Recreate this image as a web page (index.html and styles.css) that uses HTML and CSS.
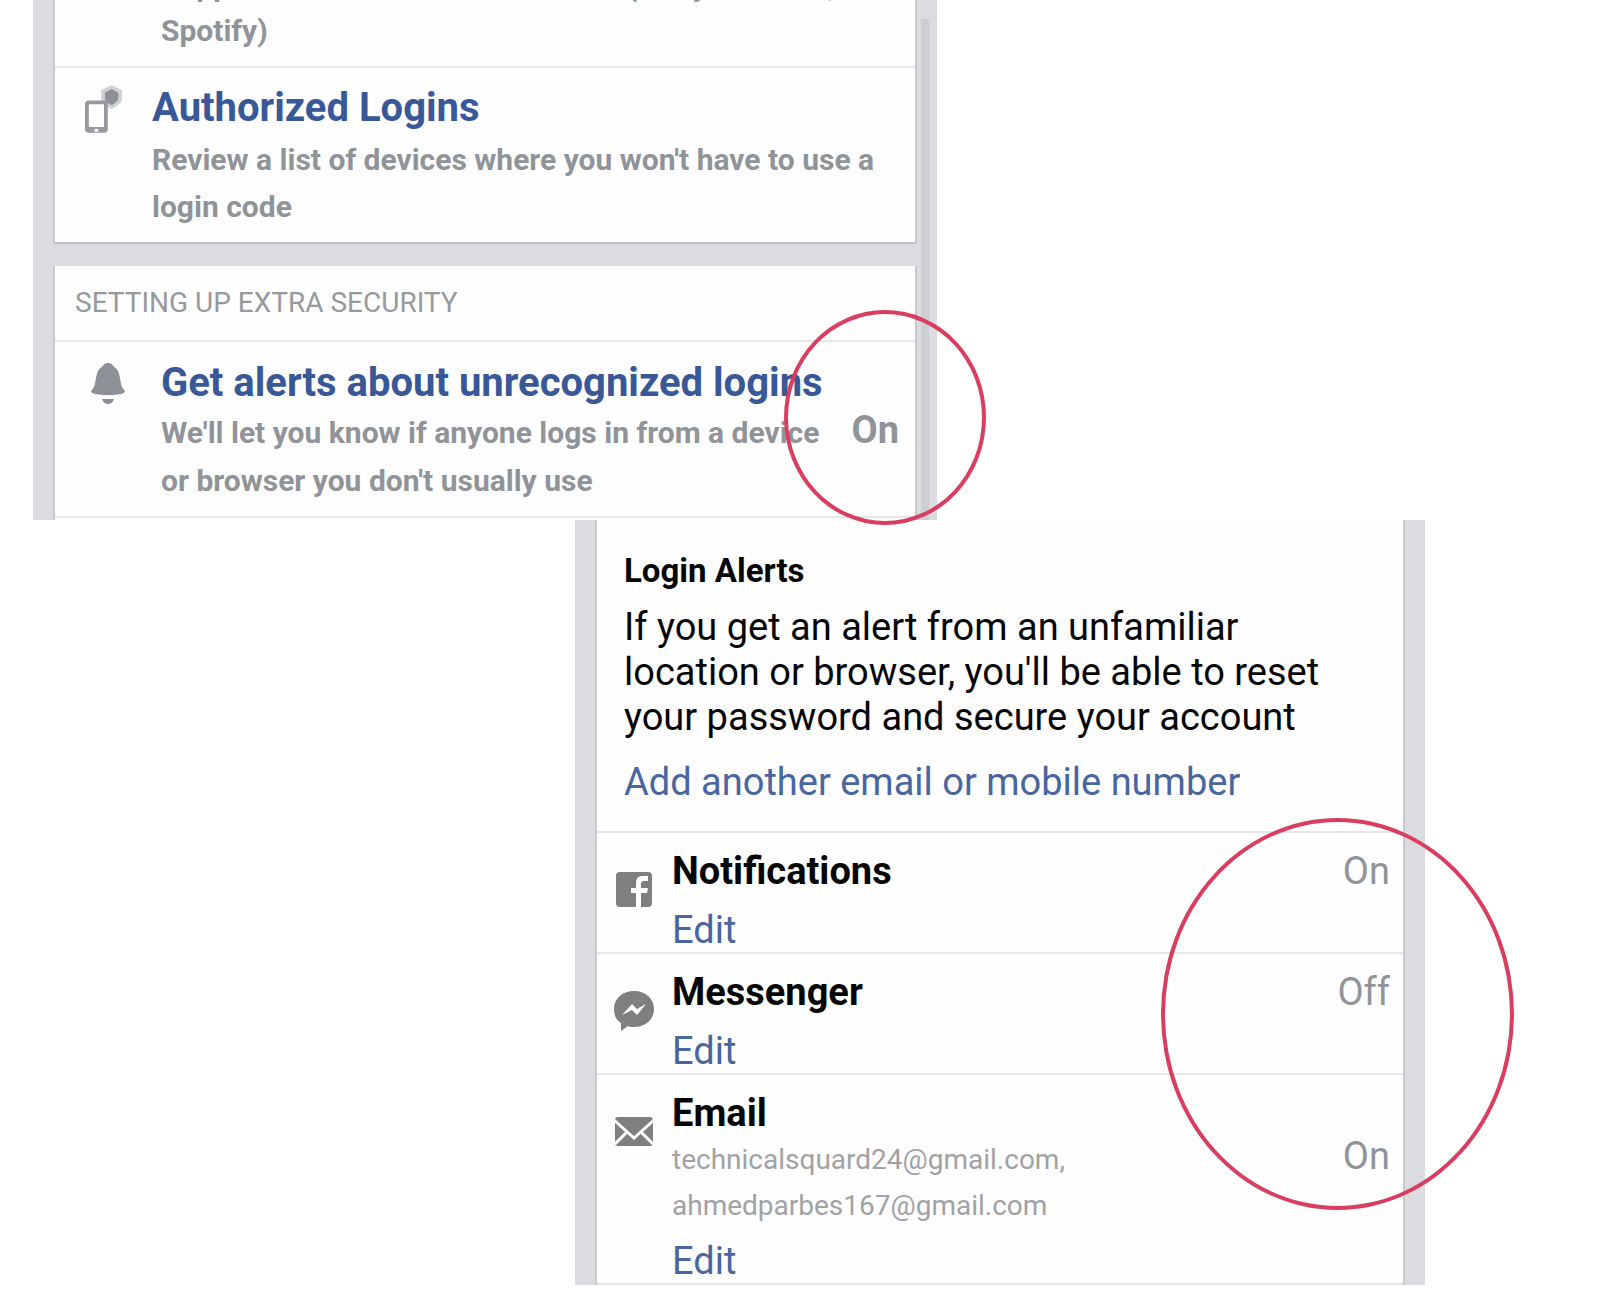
FILE: index.html
```html
<!DOCTYPE html>
<html lang="en">
<head>
<meta charset="utf-8">
<title>Security and Login</title>
<link rel="stylesheet" href="styles.css">
</head>
<body>
<main class="page">
  <section class="panel panel-settings">
    <div class="card card-top">
      <div class="row row-cut">
        <p class="desc">Support two-factor authentication (like your Xbox, Spotify)</p>
      </div>
      <div class="row row-auth">
        <svg class="icon icon-phone" viewBox="0 0 40 50" aria-hidden="true">
          <path d="M28 0l11 5v8c0 6-5 9-11 12-6-3-11-6-11-12V5z" fill="#cfd1d4"/>
          <path d="M28 4l7 4v5c0 4-3 6-7 8-4-2-7-4-7-8V8z" fill="#8d9197"/>
          <path fill-rule="evenodd" d="M4 16h16q4 0 4 4v26q0 4-4 4H4q-4 0-4-4V20q0-4 4-4zM4 20v24h16V20z" fill="#97999e"/>
          <path d="M10 46h4v3h-4z" fill="#fff"/>
        </svg>
        <div class="copy">
          <h2 class="title"><a href="#authorized">Authorized Logins</a></h2>
          <p class="desc">Review a list of devices where you won't have to use a login code</p>
        </div>
      </div>
    </div>
    <div class="card card-extra">
      <h3 class="heading">SETTING UP EXTRA SECURITY</h3>
      <div class="row row-alerts">
        <svg class="icon icon-bell" viewBox="0 0 34 42" aria-hidden="true">
          <path d="M17 0c3 0 5 2 6 4 4 2 5 6 6 11 1 7 2 10 5 13 0 3-7 4-17 4S0 31 0 28c3-3 4-6 5-13C6 10 7 6 11 4c1-2 3-4 6-4zM11 36h12c-1 3-3 5-6 5s-5-2-6-5z" fill="#8d9197"/>
        </svg>
        <div class="copy">
          <h2 class="title"><a href="#alerts">Get alerts about unrecognized logins</a></h2>
          <p class="desc">We'll let you know if anyone logs in from a device or browser you don't usually use</p>
        </div>
        <span class="state state-bold">On</span>
      </div>
    </div>
    <div class="scrollbar"></div>
    <div class="ring ring-small"></div>
  </section>

  <section class="panel panel-detail">
    <div class="card card-detail">
      <div class="intro">
        <h2 class="intro-title">Login Alerts</h2>
        <p class="intro-text">If you get an alert from an unfamiliar location or browser, you'll be able to reset your password and secure your account</p>
        <a class="link" href="#add">Add another email or mobile number</a>
      </div>
      <div class="method">
        <svg class="method-icon" viewBox="0 0 42 42" aria-hidden="true">
          <path d="M7 3h28q4 0 4 4v27q0 4-4 4h-7V24h6l1-5h-7v-4q0-3 3-3h4V7h-6q-6 0-6 7v5h-5v5h5v14H7q-4 0-4-4V7q0-4 4-4z" fill="#7f7f7f"/>
        </svg>
        <div class="method-copy">
          <h3 class="method-title">Notifications</h3>
          <a class="link" href="#notifications">Edit</a>
        </div>
        <span class="state">On</span>
      </div>
      <div class="method">
        <svg class="method-icon" viewBox="0 0 42 42" aria-hidden="true">
          <path fill-rule="evenodd" d="M21 1c12 0 20 8 20 18s-8 18-20 18c-3 0-4 0-6-1L8 41v-8C3 30 1 25 1 19 1 9 9 1 21 1zM19 14L9 25l10-5 5 5 9-11-9 5z" fill="#7f7f7f"/>
        </svg>
        <div class="method-copy">
          <h3 class="method-title">Messenger</h3>
          <a class="link" href="#messenger">Edit</a>
        </div>
        <span class="state">Off</span>
      </div>
      <div class="method method-email">
        <svg class="method-icon" viewBox="0 0 42 42" aria-hidden="true">
          <rect x="2" y="6" width="38" height="29" rx="3" fill="#7f7f7f"/>
          <path d="M1 9l20 18L41 9M2 33l12-12M40 33L28 21" fill="none" stroke="#fff" stroke-width="3"/>
        </svg>
        <div class="method-copy">
          <h3 class="method-title">Email</h3>
          <p class="emails">technicalsquard24@gmail.com, ahmedparbes167@gmail.com</p>
          <a class="link" href="#email">Edit</a>
        </div>
        <span class="state">On</span>
      </div>
    </div>
    <div class="ring ring-large"></div>
  </section>
</main>
</body>
</html>
```
FILE: styles.css
```css
* { box-sizing: border-box; }
body {
  margin: 0;
  background: #fff;
  color: #060606;
  font-family: Roboto, "Liberation Sans", sans-serif;
}
h2, h3, p { margin: 0; }
a { color: inherit; text-decoration: none; }
.page { overflow: hidden; padding-bottom: 25px; }
.panel {
  position: relative;
  padding: 0 20px;
  background: #dadce0;
}
.panel-settings {
  width: 56.5%;
  margin-left: 33px;
}
.panel-detail {
  width: 53.125%;
  margin-left: 575px;
}
.card {
  background: #fefefe;
  border: solid #c9cacf;
  border-width: 0 2px;
}
.card-top {
  border-bottom: 2px solid #bfc1c5;
  margin-bottom: 22px;
}
.card-extra { padding-bottom: 2px; }
.row {
  display: flex;
  align-items: flex-start;
}
.row-cut {
  height: 68px;
  align-items: flex-end;
  overflow: hidden;
  padding: 0 30px 13px 106px;
  border-bottom: 2px solid #e5e6e8;
}
.row-cut .desc { line-height: 45px; }
.row-auth { padding: 16px 30px 12px 30px; gap: 29px; }
.row-auth .title { margin-bottom: 4px; }
.row-alerts {
  padding: 17px 16px 11px 36px;
  gap: 20px;
  border-bottom: 2px solid #e5e6e8;
}
.row-alerts .title { margin-bottom: 2px; }
.row-alerts .desc { line-height: 48px; }
.icon { flex: none; }
.icon-phone { width: 38px; height: 50px; }
.icon-bell { width: 34px; height: 42px; margin: 4px 16px 0 0; }
.title {
  color: #385898;
  font-size: 40px;
  line-height: 48px;
  font-weight: 700;
  white-space: nowrap;
}
.desc {
  color: #909499;
  font-size: 30px;
  line-height: 47px;
  font-weight: 700;
}
.copy { flex: 1; min-width: 0; }
.heading {
  padding: 13px 20px;
  border-bottom: 2px solid #e5e6e8;
  color: #97999d;
  font-size: 28px;
  line-height: 48px;
  font-weight: 400;
}
.state {
  color: #909499;
  font-size: 38px;
  line-height: 44px;
}
.state-bold { align-self: center; padding-bottom: 4px; font-weight: 700; }
.scrollbar {
  position: absolute;
  top: 19px;
  right: 8px;
  bottom: 0;
  width: 8px;
  background: #cdced2;
}
.ring {
  position: absolute;
  z-index: 1;
  border: 4px solid #d93d60;
  border-radius: 50%;
  pointer-events: none;
}
.ring-small { width: 202px; height: 215px; right: -49px; bottom: -5px; }
.ring-large { width: 353px; height: 392px; right: -89px; bottom: 75px; }
.intro {
  padding: 30px 80px 27px 27px;
  border-bottom: 2px solid #e5e6e8;
}
.intro-title { font-size: 33px; line-height: 42px; font-weight: 700; }
.intro-text { padding: 13px 0 20px; font-size: 38px; line-height: 45px; }
.link {
  display: block;
  color: #48669f;
  font-size: 38px;
  line-height: 44px;
}
.method {
  display: flex;
  align-items: flex-start;
  padding: 16px 13px 0 16px;
  gap: 17px;
  border-bottom: 2px solid #e5e6e8;
}
.method-icon { flex: none; width: 42px; height: 42px; margin-top: 20px; }
.method-copy { flex: 1; min-width: 0; }
.method-title {
  margin-bottom: 15px;
  font-size: 38px;
  line-height: 44px;
  font-weight: 700;
}
.method-email .method-title { margin-bottom: 2px; }
.method-email .state { margin-top: 43px; }
.emails {
  max-width: 440px;
  margin-bottom: 10px;
  color: #a0a2a5;
  font-size: 28px;
  line-height: 46px;
}
```
